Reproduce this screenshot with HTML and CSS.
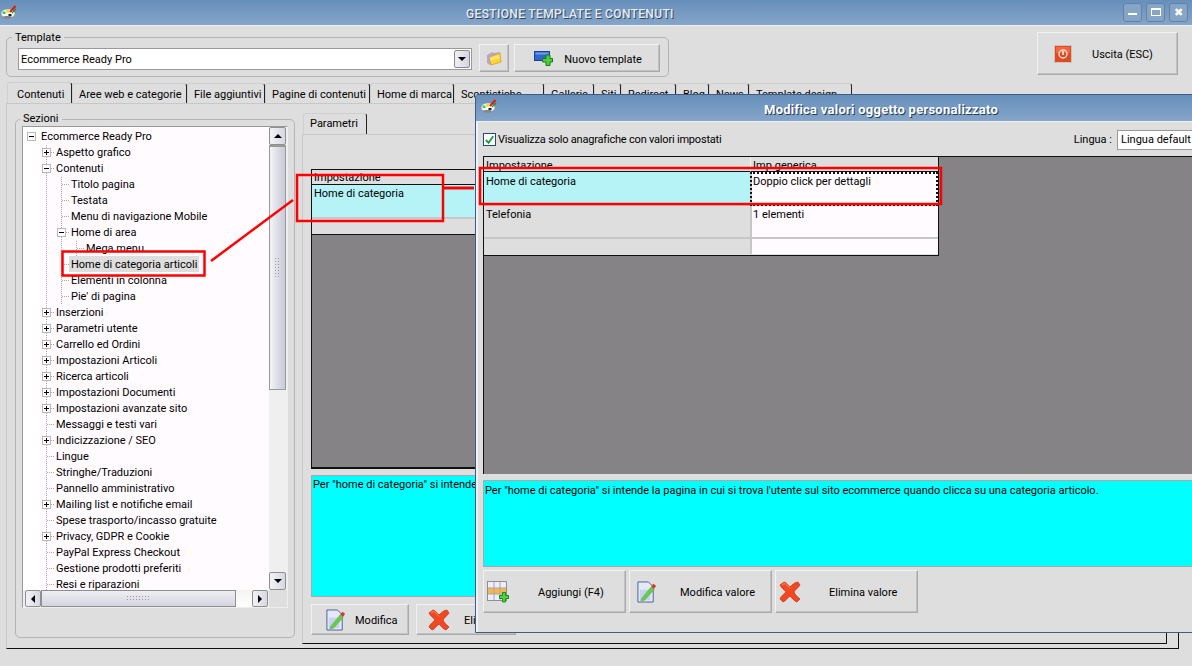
FILE: index.html
```html
<!DOCTYPE html>
<html lang="it">
<head>
<meta charset="utf-8">
<title>Gestione template e contenuti</title>
<link rel="stylesheet" href="styles.css">
</head>
<body>
<svg class="defs" width="0" height="0" aria-hidden="true">
  <symbol id="i-palette" viewBox="0 0 16 14">
    <ellipse cx="7" cy="8.500" rx="7" ry="4.500" fill="#fafafa" stroke="#8a8a8a" stroke-width=".6"/>
    <path d="M2 12c2 2 7 2 9 0l-2-1H4z" fill="#858585"/>
    <rect x="1.500" y="6.500" width="3" height="2.500" fill="#3c6"/>
    <rect x="5" y="5" width="3" height="2.500" fill="#fd0"/>
    <rect x="7.500" y="9" width="3" height="2" fill="#222"/>
    <path d="M9 7 14.500 1" stroke="#e11" stroke-width="2"/>
    <path d="M11 8 15 4" stroke="#191" stroke-width="1.200"/>
  </symbol>
  <symbol id="i-folder" viewBox="0 0 16 15">
    <path d="M1 4 6 1l2 1 6-1v9L4 14 1 12z" fill="#b9a2e0"/>
    <path d="M3 6 14 2l1 9-10 3z" fill="#ffd334" stroke="#cf9c10" stroke-width=".7"/>
    <path d="M4 7 13 4l.5 3-9 3z" fill="#ffe67a"/>
  </symbol>
  <symbol id="i-new" viewBox="0 0 19 15">
    <rect x=".5" y=".5" width="15" height="9" fill="#2f67cf" stroke="#1b3f93"/>
    <rect x="1.500" y="1.500" width="13" height="2" fill="#6d9be8"/>
    <path d="M8.500 7.500h3.500V4h4v3.500h2.500v3.500H16v3.500h-4V11H8.500z" fill="#4ccf3c" stroke="#1a7a1a"/>
  </symbol>
  <symbol id="i-power" viewBox="0 0 18 18">
    <rect x=".5" y=".5" width="17" height="17" fill="#e04a23" stroke="#c9c4bc"/>
    <rect x="2" y="2" width="14" height="6" fill="#f4663c"/>
    <circle cx="9" cy="9" r="4" fill="none" stroke="#f7d8cc" stroke-width="1.500"/>
    <path d="M9 6v4" stroke="#fff" stroke-width="1.500"/>
  </symbol>
  <symbol id="i-edit" viewBox="0 0 21 23">
    <path d="M1 1h11l5 5v16H1z" fill="#e4e9f6" stroke="#4a5e9c"/>
    <path d="M3 9h11v11H3z" fill="#c8d2ea"/>
    <path d="M5 18 15 6l3 3L8 20l-4 1z" fill="#5fcf45" stroke="#7c9a70" stroke-width=".6"/>
    <path d="M15 6l2-3 3 2-2 3z" fill="#d43a25"/>
  </symbol>
  <symbol id="i-x" viewBox="0 0 22 22">
    <path d="M1 4 5 1c2 0 4 3 6 5 2-2 5-5 8-5l2 3c-2 3-5 5-6 7 1 3 4 5 6 7l-3 3c-3-1-5-4-7-6-3 2-4 5-7 6l-3-3c1-3 4-5 6-7C6 9 2 7 1 4z" fill="#f2481f" stroke="#c0301a" stroke-width=".7"/>
    <path d="M3 4 5 2.500c2 0 4 3 6 5" fill="none" stroke="#ff8a60"/>
  </symbol>
  <symbol id="i-grid" viewBox="0 0 22 22">
    <rect x=".5" y=".5" width="19" height="19" fill="#efeef6" stroke="#8f8f8f"/>
    <path d="M1 7h18v6H1z" fill="#f8b54a"/>
    <path d="M7 1v18M13 1v18M1 7h18M1 13h18" stroke="#a5a5b4"/>
    <path d="M12.500 14.500h3v-3h3v3h3v3h-3v3.500h-3v-3.500h-3z" fill="#55d33f" stroke="#1e8a1e"/>
  </symbol>
</svg>

<div class="window">
  <header class="titlebar main-title">
    <svg class="tb-icon"><use href="#i-palette"/></svg>
    <span class="tb-text">GESTIONE TEMPLATE E CONTENUTI</span>
    <div class="winbtns">
      <span class="winbtn"><i class="g-min"></i></span>
      <span class="winbtn"><i class="g-max"></i></span>
      <span class="winbtn g-close">✖</span>
    </div>
  </header>

  <div class="toolbar">
    <fieldset class="fs fs-template">
      <legend>Template</legend>
      <div class="combo"><span class="combo-text">Ecommerce Ready Pro</span><span class="arrowbtn"><i class="tri-d"></i></span></div>
      <button class="btn btn-folder"><svg class="ic15"><use href="#i-folder"/></svg></button>
      <button class="btn btn-new"><svg class="ic-new"><use href="#i-new"/></svg><span>Nuovo template</span></button>
    </fieldset>
    <button class="btn btn-exit"><svg class="ic18"><use href="#i-power"/></svg><span>Uscita (ESC)</span></button>
  </div>

  <nav class="tabs">
    <span class="tab active t1">Contenuti</span>
    <span class="tab t2">Aree web e categorie</span>
    <span class="tab t3">File aggiuntivi</span>
    <span class="tab t4">Pagine di contenuti</span>
    <span class="tab t5">Home di marca</span>
    <span class="tab t6">Scontistiche</span>
    <span class="tab t7">Gallerie</span>
    <span class="tab t8">Siti</span>
    <span class="tab t9">Redirect</span>
    <span class="tab t10">Blog</span>
    <span class="tab t11">News</span>
    <span class="tab t12">Template design</span>
  </nav>

  <main class="tabpanel">
    <fieldset class="fs fs-tree">
      <legend>Sezioni</legend>
      <div class="treebox">
        <div class="tree">
          <div class="row"><i class="c"><b class="exp minus"></b></i><span>Ecommerce Ready Pro</span></div>
          <div class="row"><i class="c"></i><i class="c t"><b class="exp plus"></b></i><span>Aspetto grafico</span></div>
          <div class="row"><i class="c"></i><i class="c t"><b class="exp minus"></b></i><span>Contenuti</span></div>
          <div class="row"><i class="c"></i><i class="c v"></i><i class="c t"></i><span>Titolo pagina</span></div>
          <div class="row"><i class="c"></i><i class="c v"></i><i class="c t"></i><span>Testata</span></div>
          <div class="row"><i class="c"></i><i class="c v"></i><i class="c t"></i><span>Menu di navigazione Mobile</span></div>
          <div class="row"><i class="c"></i><i class="c v"></i><i class="c t"><b class="exp minus"></b></i><span>Home di area</span></div>
          <div class="row"><i class="c"></i><i class="c v"></i><i class="c v"></i><i class="c t"></i><span>Mega menu</span></div>
          <div class="row"><i class="c"></i><i class="c v"></i><i class="c t"></i><span class="sel">Home di categoria articoli</span></div>
          <div class="row"><i class="c"></i><i class="c v"></i><i class="c t"></i><span>Elementi in colonna</span></div>
          <div class="row"><i class="c"></i><i class="c v"></i><i class="c t"></i><span>Pie' di pagina</span></div>
          <div class="row"><i class="c"></i><i class="c t"><b class="exp plus"></b></i><span>Inserzioni</span></div>
          <div class="row"><i class="c"></i><i class="c t"><b class="exp plus"></b></i><span>Parametri utente</span></div>
          <div class="row"><i class="c"></i><i class="c t"><b class="exp plus"></b></i><span>Carrello ed Ordini</span></div>
          <div class="row"><i class="c"></i><i class="c t"><b class="exp plus"></b></i><span>Impostazioni Articoli</span></div>
          <div class="row"><i class="c"></i><i class="c t"><b class="exp plus"></b></i><span>Ricerca articoli</span></div>
          <div class="row"><i class="c"></i><i class="c t"><b class="exp plus"></b></i><span>Impostazioni Documenti</span></div>
          <div class="row"><i class="c"></i><i class="c t"><b class="exp plus"></b></i><span>Impostazioni avanzate sito</span></div>
          <div class="row"><i class="c"></i><i class="c t"></i><span>Messaggi e testi vari</span></div>
          <div class="row"><i class="c"></i><i class="c t"><b class="exp plus"></b></i><span>Indicizzazione / SEO</span></div>
          <div class="row"><i class="c"></i><i class="c t"></i><span>Lingue</span></div>
          <div class="row"><i class="c"></i><i class="c t"></i><span>Stringhe/Traduzioni</span></div>
          <div class="row"><i class="c"></i><i class="c t"></i><span>Pannello amministrativo</span></div>
          <div class="row"><i class="c"></i><i class="c t"><b class="exp plus"></b></i><span>Mailing list e notifiche email</span></div>
          <div class="row"><i class="c"></i><i class="c t"></i><span>Spese trasporto/incasso gratuite</span></div>
          <div class="row"><i class="c"></i><i class="c t"><b class="exp plus"></b></i><span>Privacy, GDPR e Cookie</span></div>
          <div class="row"><i class="c"></i><i class="c t"></i><span>PayPal Express Checkout</span></div>
          <div class="row"><i class="c"></i><i class="c t"></i><span>Gestione prodotti preferiti</span></div>
          <div class="row"><i class="c"></i><i class="c t"></i><span>Resi e riparazioni</span></div>
        </div>
        <div class="vbar">
          <span class="sbtn"><i class="tri-u"></i></span>
          <span class="vthumb"><i class="grip-v"></i></span>
          <span class="vtrack"></span>
          <span class="sbtn"><i class="tri-d"></i></span>
        </div>
        <div class="hbar">
          <span class="sbtn"><i class="tri-l"></i></span>
          <span class="hthumb"><i class="grip-h"></i></span>
          <span class="htrack"></span>
          <span class="sbtn"><i class="tri-r"></i></span>
        </div>
      </div>
    </fieldset>

    <section class="params">
      <div class="subtabs"><span class="tab active subtab">Parametri</span></div>
      <div class="subpanel">
        <div class="pgrid">
          <div class="pg-head">Impostazione</div>
          <div class="pg-sel">Home di categoria</div>
          <div class="pg-empty"></div>
          <div class="pg-dark"></div>
        </div>
        <div class="descbox pdesc">Per "home di categoria" si intende la pagina in cui si trova l'utente</div>
        <div class="pbtns">
          <button class="btn btn-pmod"><svg class="ic22"><use href="#i-edit"/></svg><span>Modifica</span></button>
          <button class="btn btn-pdel"><svg class="ic22"><use href="#i-x"/></svg><span>Elimina</span></button>
        </div>
      </div>
    </section>
  </main>
</div>

<div class="dialog">
  <header class="titlebar dlg-title">
    <svg class="tb-icon"><use href="#i-palette"/></svg>
    <span class="dlg-text">Modifica valori oggetto personalizzato</span>
  </header>
  <div class="dlg-body">
    <div class="dlg-top">
      <label class="chk"><span class="chkbox"><svg viewBox="0 0 12 12" width="12" height="12"><path d="M2 6l3 3 5-7" fill="none" stroke="#1f9a3a" stroke-width="2"/></svg></span>Visualizza solo anagrafiche con valori impostati</label>
      <div class="lang"><span>Lingua :</span><span class="langsel">Lingua default</span></div>
    </div>
    <div class="dgrid-area">
      <div class="dgrid">
        <div class="dh">Impostazione</div><div class="dh dh2">Imp.generica</div>
        <div class="dc r1 sel1">Home di categoria</div><div class="dc r1 val focus">Doppio click per dettagli</div>
        <div class="dc r2">Telefonia</div><div class="dc r2 val">1 elementi</div>
        <div class="dc r3"></div><div class="dc r3 val"></div>
      </div>
    </div>
    <div class="descbox ddesc">Per "home di categoria" si intende la pagina in cui si trova l'utente sul sito ecommerce quando clicca su una categoria articolo.</div>
    <div class="dbtns">
      <button class="btn btn-d1"><svg class="ic22"><use href="#i-grid"/></svg><span>Aggiungi (F4)</span></button>
      <button class="btn btn-d2"><svg class="ic22"><use href="#i-edit"/></svg><span>Modifica valore</span></button>
      <button class="btn btn-d3"><svg class="ic22"><use href="#i-x"/></svg><span>Elimina valore</span></button>
    </div>
  </div>
</div>

<svg class="marks" width="1192" height="666" aria-hidden="true">
  <g fill="none" stroke="#f00">
    <rect x="62.500" y="251.500" width="142" height="24" stroke-width="2.500"/>
    <rect x="297" y="175" width="146" height="46" stroke-width="2.500"/>
    <rect x="480" y="168" width="461" height="36" stroke-width="2.500"/>
    <path d="M211 261 293 200" stroke-width="2.500"/>
    <path d="M444 188H474" stroke-width="3"/>
  </g>
</svg>
</body>
</html>
```
FILE: styles.css
```css
* { box-sizing: border-box; }
html, body { margin: 0; padding: 0; height: 100%; }
body {
  width: 1192px; height: 666px; overflow: hidden; position: relative;
  background: #dedede; color: #000;
  font: 11px/14px Roboto, "Noto Sans", sans-serif;
}
.defs { position: absolute; }
button { font: inherit; color: inherit; padding: 0; }
i { font-style: normal; display: block; }

/* Title bars */
.titlebar {
  display: flex; align-items: center; position: relative;
  background: linear-gradient(#668fbb, #86a5c8);
}
.main-title { height: 26px; border-bottom: 1px solid #e9eff5; }
.tb-icon { width: 16px; height: 14px; margin-left: 1px; margin-top: -2px; flex: none; }
.tb-text {
  position: absolute; left: 466px; top: 7px; white-space: nowrap;
  font-size: 12px; font-weight: 500; letter-spacing: .35px; color: #e6ebf2; text-shadow: 1px 1px 0 #2f4560;
}
.winbtns { margin-left: auto; margin-right: 4px; display: flex; gap: 4px; margin-top: -1px; }
.winbtn {
  width: 19px; height: 19px; border: 1px solid #5f82aa; border-radius: 3px;
  background: #86a4c6; display: flex; align-items: center; justify-content: center;
  color: #fff; font-size: 11px; line-height: 1;
}
.g-min { width: 9px; height: 2px; background: #fff; margin-top: 4px; }
.g-max { width: 10px; height: 8px; border: 1px solid #fff; border-top-width: 2px; }

/* Toolbar */
.toolbar { height: 56px; display: flex; padding: 0 14px 0 6px; justify-content: space-between; }
.fs { border: 1px solid #b4b4b4; border-radius: 5px; margin: 0; min-width: 0; background: #dedede; }
.fs legend { padding: 0 3px; margin-left: -6px; line-height: 12px; height: 12px; font-size: 11px; }
.fs-template legend { line-height: 14px; }
.fs-template {
  width: 663px; height: 46px; margin-top: 5px; padding: 1px 8px 0 11px;
  display: flex; align-items: flex-start;
}
.combo {
  width: 455px; height: 22px; margin-top: 4px; background: #fff; border: 1px solid #999;
  display: flex; align-items: center; justify-content: space-between; padding: 0 1px 0 2px;
}
.combo-text { padding-top: 2px; }
.arrowbtn {
  width: 16px; height: 18px; border: 1px solid #8a8a8a; border-radius: 2px;
  background: linear-gradient(90deg, #f0f0f5, #d5d5e2); display: flex; align-items: center; justify-content: center;
}
.btn {
  background: #dedede; display: flex; align-items: center; cursor: default;
  border: 1px solid #a9a9a9; border-top-color: #f2f2f2; border-left-color: #f2f2f2;
  box-shadow: inset -1px -1px 0 #c2c2c2;
}
.btn span { padding-top: 2px; }
.btn-folder { width: 30px; height: 28px; margin-left: 7px; padding-left: 6px; }
.btn-new { width: 146px; height: 28px; margin-left: 5px; padding-left: 19px; }
.btn-new span { margin-left: 11px; padding-top: 3px; }
.ic15 { width: 16px; height: 15px; }
.ic-new { width: 19px; height: 15px; }
.ic18 { width: 18px; height: 18px; flex: none; }
.ic22 { width: 22px; height: 22px; flex: none; }
.btn-exit { width: 141px; height: 43px; margin-top: 6px; padding-left: 16px; }
.btn-exit span { margin-left: 20px; }

/* Tabs */
.tabs { display: flex; height: 21px; padding-left: 7px; position: relative; }
.tab {
  height: 20px; border: 1px solid #cfcfcf; border-bottom: 0; border-right: 1.500px solid #222;
  border-radius: 3px 3px 0 0; padding: 4px 0 0 6px; white-space: nowrap; overflow: hidden; flex: none;
}
.tabs .tab { margin-top: 1px; height: 20px; }
.tabs .tab.active { margin-top: 0; height: 21px; padding-left: 9px; padding-top: 5px; }
.t1 { width: 65px; } .t2 { width: 115px; } .t3 { width: 78px; } .t4 { width: 105px; }
.t5 { width: 84px; } .t6 { width: 90px; } .t7 { width: 50px; } .t8 { width: 27px; }
.t9 { width: 55px; } .t10 { width: 33px; } .t11 { width: 40px; } .t12 { width: 103px; }

.tabpanel {
  width: 1173px; height: 546px; margin-left: 6px; margin-top: 0;
  border-top: 1px solid #c8c8c8; border-left: 1px solid #c8c8c8;
  border-right: 1px solid #111; border-bottom: 1px solid #111;
  display: flex; padding: 9px 11px 5px 8px; gap: 7px;
}

/* Tree */
.fs-tree { width: 280px; height: 525px; padding: 0 6px 0 6px; }
.fs-tree legend { margin-left: -2px; }
.treebox {
  width: 266px; height: 482px; margin-top: 1px; border: 1px solid #999; border-right-color: #eee; border-bottom-color: #eee;
  display: grid; grid-template-columns: 246px 18px; grid-template-rows: 463px 17px; background: #dedede;
}
.tree {
  overflow: hidden; padding: 1px 0 0 1px;
  background: linear-gradient(90deg, #fff 17px, #fffbff 17px);
}
.row { display: flex; height: 16px; line-height: 17px; white-space: nowrap; }
.row .c { width: 15px; height: 16px; flex: none; position: relative; }
.row span { margin-left: 1px; padding: 0 1px; }
.row .c.v {
  background: repeating-linear-gradient(0deg, #aaa 0 1px, transparent 1px 2px) 7px 0 / 1px 16px no-repeat;
}
.row .c.t {
  background:
    repeating-linear-gradient(0deg, #aaa 0 1px, transparent 1px 2px) 7px 0 / 1px 16px no-repeat,
    repeating-linear-gradient(90deg, #aaa 0 1px, transparent 1px 2px) 8px 8px / 7px 1px no-repeat;
}
.row .sel { background: #dedede; margin-left: 0; padding: 0 2px; height: 16px; }
.exp {
  position: absolute; left: 3px; top: 4px; width: 9px; height: 9px; background: #fff; border: 1px solid #b9b9b9; display: block;
}
.exp::before { content: ""; position: absolute; left: 1px; top: 3px; width: 5px; height: 1px; background: #000; }
.exp.plus::after { content: ""; position: absolute; left: 3px; top: 1px; width: 1px; height: 5px; background: #000; }

/* Scrollbars */
.vbar { display: flex; flex-direction: column; width: 18px; height: 463px; background: #efefef; }
.hbar { grid-column: 1; display: flex; height: 17px; padding-left: 2px; background: #f0f0f0; }
.sbtn {
  width: 16px; height: 17px; flex: none; border: 1px solid #8f8f8f; border-radius: 2px;
  background: linear-gradient(90deg, #f2f2f6, #d8d8e4); display: flex; align-items: center; justify-content: center;
}
.vbar .sbtn { width: 17px; height: 18px; }
.vthumb {
  height: 245px; width: 17px; border: 1px solid #9a9a9a; border-top-width: 2px;
  background: linear-gradient(90deg, #f3f3f7, #c9c9d8); display: block; position: relative;
}
.vtrack { flex: 1; }
.hthumb {
  width: 195px; height: 17px; border: 1px solid #8f8f8f;
  background: linear-gradient(#eeeef3, #d5d5e0); position: relative;
}
.htrack { width: 16px; background: linear-gradient(#f4f4ee, #fff); flex: none; }
.grip-v {
  position: absolute; left: 4px; top: 110px; width: 7px; height: 22px;
  background: radial-gradient(circle, #999 0 .7px, transparent 1px) 0 0 / 3px 3px;
}
.grip-h {
  position: absolute; left: 84px; top: 4px; width: 23px; height: 7px;
  background: radial-gradient(circle, #999 0 .7px, transparent 1px) 0 0 / 3px 3px;
}
.tri-d { width: 0; height: 0; border: 4px solid transparent; border-top: 4px solid #000; border-bottom: 0; }
.tri-u { width: 0; height: 0; border: 4px solid transparent; border-bottom: 4px solid #000; border-top: 0; }
.tri-l { width: 0; height: 0; border: 4px solid transparent; border-right: 4px solid #000; border-left: 0; }
.tri-r { width: 0; height: 0; border: 4px solid transparent; border-left: 4px solid #000; border-right: 0; }

/* Parameters */
.params { flex: 1; min-width: 0; display: flex; flex-direction: column; height: 531px; }
.subtabs { height: 21px; padding-left: 1px; flex: none; }
.subtab { width: 64px; height: 21px; padding: 3px 0 0 6px; display: block; }
.subpanel {
  flex: 1; border-top: 1px solid #c8c8c8; border-left: 1px solid #c8c8c8;
  border-right: 1px solid #111; border-bottom: 1px solid #111;
  padding: 34px 8px 0 8px; display: flex; flex-direction: column;
}
.pgrid { height: 300px; border-top: 1px solid #111; border-left: 1px solid #111; border-bottom: 2px solid #111; display: flex; flex-direction: column; flex: none; }
.pg-head { height: 15px; line-height: 15px; padding-left: 2px; border-bottom: 1px solid #111; }
.pg-sel { height: 34px; background: #b5f3f6; padding: 2px 0 0 2px; border-bottom: 2px solid #c7c7c7; }
.pg-empty { height: 16px; border-bottom: 1px solid #111; }
.pg-dark { flex: 1; background: #868386; }
.descbox { background: #0ff; border: 1px solid #a8a8a8; padding: 0 1px; white-space: nowrap; overflow: hidden; }
.pdesc { height: 122px; margin-top: 6px; flex: none; padding-top: 2px; }
.pbtns { display: flex; gap: 7px; margin-top: 7px; }
.btn-pmod { width: 98px; height: 31px; padding-left: 13px; }
.btn-pmod span { margin-left: 8px; }
.btn-pdel { width: 100px; height: 31px; padding-left: 11px; }
.btn-pdel span { margin-left: 14px; }

/* Dialog (floating window) */
.dialog {
  position: absolute; left: 475px; top: 94px; width: 760px; height: 539px;
  border: 1px solid #3d5b84; border-radius: 3px 0 0 0; background: #dedede;
  display: flex; flex-direction: column;
}
.dlg-title { height: 27px; flex: none; border-bottom: 1px solid #e9eff5; }
.dlg-title .tb-icon { margin-left: 5px; margin-top: -4px; }
.dlg-text {
  position: absolute; left: 288px; top: 8px; white-space: nowrap;
  font-size: 13px; font-weight: 700; letter-spacing: .25px; color: #fff; text-shadow: 1px 1px 0 #253a55;
}
.dlg-body { flex: 1; padding: 0 0 0 5px; border-left: 2px solid #f2f2f6; display: flex; flex-direction: column; }
.dlg-top { height: 34px; display: flex; align-items: center; padding-top: 1px; flex: none; }
.chk { display: flex; align-items: center; white-space: nowrap; line-height: 16px; letter-spacing: -.2px; }
.chkbox {
  width: 13px; height: 13px; background: #fff; border: 1px solid #1f4a7a; margin-right: 2px;
  display: flex; align-items: center; justify-content: center;
}
.lang { margin-left: auto; display: flex; align-items: center; gap: 5px; white-space: nowrap; }
.langsel { width: 117px; height: 20px; background: #fff; border: 1px solid #999; padding: 2px 0 0 3px; }
.dgrid-area { height: 318px; flex: none; background: #868386; border-top: 1px solid #111; border-left: 1px solid #111; }
.dgrid {
  width: 455px; height: 99px; display: grid; grid-template-columns: 266px 188px; grid-template-rows: 15px 34px 33px 15px;
  background: #dedede; border-right: 1px solid #111; border-bottom: 1px solid #111;
}
.dh { line-height: 17px; padding-left: 2px; border-bottom: 1px solid #111; }
.dh2 { border-left: 1px solid #f4f4f4; background: #dedede; padding-left: 2px; }
.dc { padding: 2px 0 0 2px; border-bottom: 2px solid #c7c7c7; }
.r1 { padding-top: 3px; }
.r3 { border-bottom: 0; }
.val { background: #fffbff; border-left: 2px solid #c7c7c7; padding-left: 1px; }
.sel1 { background: #b5f3f6; }
.focus { outline: 2px dotted #111; outline-offset: -2px; }
.ddesc { height: 87px; margin-top: 6px; flex: none; padding: 3px 1px 0; border-right: 0; }
.dbtns { display: flex; gap: 3px; margin-top: 3px; }
.dbtns .btn { width: 143px; height: 43px; padding-left: 3px; }
.btn-d1 span { margin-left: 29px; }
.dbtns .btn-d2 { padding-left: 6px; }
.btn-d2 span { margin-left: 22px; }
.btn-d3 span { margin-left: 28px; }

/* Red annotations drawn over the screenshot */
.marks { position: absolute; left: 0; top: 0; pointer-events: none; }
```
